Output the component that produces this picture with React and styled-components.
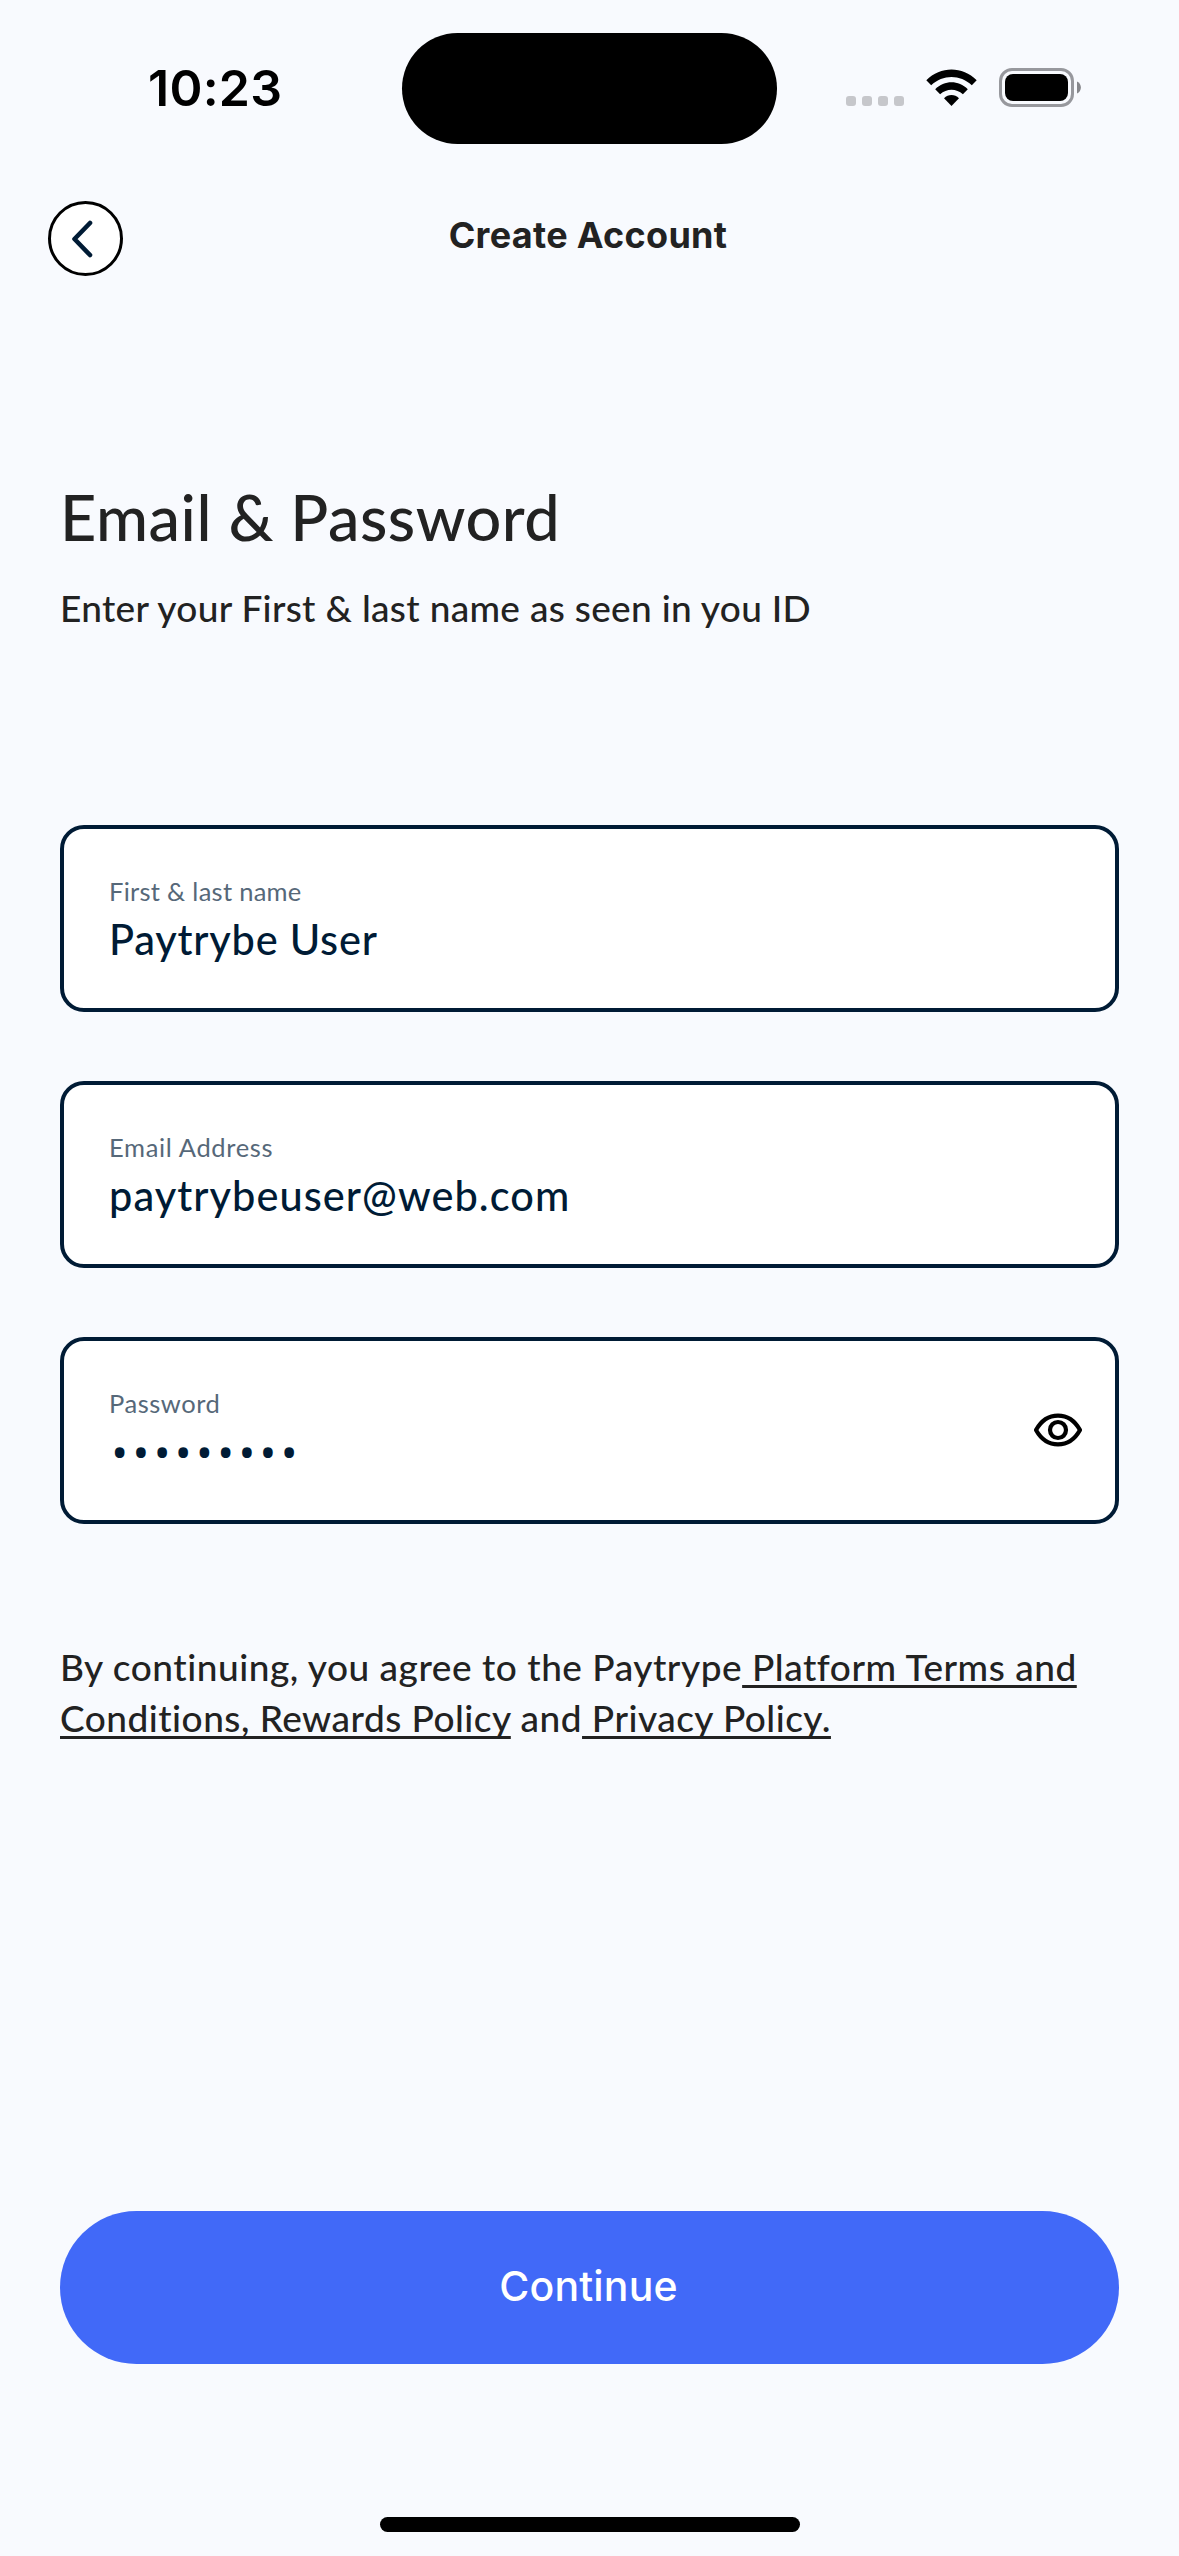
import React from "react";
import styled, { createGlobalStyle } from "styled-components";

const GlobalStyle = createGlobalStyle`
  * { box-sizing: border-box; }
  body { margin: 0; background: #f8fafe; }
`;

const Screen = styled.div`
  display: flex;
  flex-direction: column;
  width: 1179px;
  height: 2556px;
  background: #f8fafe;
  color: #222222;
  font-family: Lato, "Liberation Sans", sans-serif;
  font-variant-ligatures: none;
  overflow: hidden;
`;

const StatusBar = styled.div`
  display: grid;
  grid-template-columns: 402px 375px 1fr;
  align-items: center;
  height: 177px;
`;

const Clock = styled.time`
  padding: 0 0 2px 148px;
  color: #000;
  font-family: Inter, sans-serif;
  font-size: 50px;
  font-weight: 600;
  line-height: 60px;
  letter-spacing: 0.25px;
`;

const Island = styled.div`
  height: 111px;
  border-radius: 56px;
  background: #000;
`;

const StatusIcons = styled.div`
  display: flex;
  align-items: center;
  padding: 0 0 2px 69px;
`;

const SignalDots = styled.div`
  display: flex;
  gap: 6px;
  padding-top: 27px;
`;

const SignalDot = styled.span`
  width: 10px;
  height: 10px;
  border-radius: 3px;
  background: #c6c7cb;
`;

const WifiIcon = styled.svg`
  width: 51px;
  height: 38px;
  margin: 0 22px 0 22px;
`;

const BatteryIcon = styled.svg`
  width: 83px;
  height: 39px;
`;

const Header = styled.header`
  display: grid;
  grid-template-columns: 75px 1fr 75px;
  align-items: center;
  padding: 24px 48px 0;
`;

const BackButton = styled.button`
  display: flex;
  align-items: center;
  justify-content: center;
  width: 75px;
  height: 75px;
  padding: 0;
  border: 3px solid #000;
  border-radius: 50%;
  background: #fff;

  svg {
    width: 26px;
    height: 40px;
    margin-right: 7px;
  }
`;

const ScreenTitle = styled.h1`
  margin: 0;
  padding: 0 3px 7px 0;
  font-family: Inter, sans-serif;
  font-size: 36px;
  font-weight: 700;
  line-height: 44px;
  letter-spacing: 0.3px;
  text-align: center;
`;

const Content = styled.main`
  display: flex;
  flex: 1;
  flex-direction: column;
  padding: 203px 60px 0;
`;

const Heading = styled.h2`
  margin: 0;
  font-size: 63px;
  font-weight: 500;
  line-height: 76px;
  letter-spacing: 0.5px;
`;

const Subheading = styled.p`
  margin: 28px 0 0;
  font-size: 37px;
  font-weight: 500;
  line-height: 50px;
  letter-spacing: 0.32px;
`;

const Form = styled.form`
  display: flex;
  flex-direction: column;
  gap: 69px;
  margin-top: 192px;
`;

const FieldBox = styled.div`
  display: flex;
  align-items: center;
  justify-content: space-between;
  height: 187px;
  padding: 0 32px 0 45px;
  border: 4px solid #001b35;
  border-radius: 24px;
  background: #fff;
`;

const FieldText = styled.div`
  display: flex;
  flex-direction: column;
  gap: 7px;
  padding-top: 1px;
`;

const FieldLabel = styled.span`
  color: #566879;
  font-size: 25.5px;
  line-height: 32px;
  letter-spacing: ${({ $tracking }) => $tracking}px;
`;

const FieldValue = styled.span`
  color: #001b35;
  font-size: 41.5px;
  font-weight: 500;
  line-height: 50px;
  letter-spacing: ${({ $tracking }) => $tracking}px;
`;

const MaskedValue = styled(FieldValue)`
  padding-left: 2px;
  font-family: "Open Sans", sans-serif;
  font-size: 46px;
  font-weight: 400;
`;

const EyeIcon = styled.svg`
  width: 50px;
  height: 36px;
  margin-bottom: 2px;
`;

const Terms = styled.p`
  margin: 117px 0 0;
  font-size: 37px;
  font-weight: 500;
  line-height: 51px;
`;

const TermsLine = styled.span`
  display: block;
  white-space: pre;
  letter-spacing: ${({ $tracking }) => $tracking}px;
`;

const TermsLink = styled.a`
  color: inherit;
  text-decoration: underline;
  text-decoration-thickness: 2.5px;
  text-underline-offset: 3.5px;
  text-decoration-skip-ink: none;
`;

const Footer = styled.footer`
  display: flex;
  flex-direction: column;
  align-items: center;
  padding: 0 60px 24px;
`;

const ContinueButton = styled.button`
  width: 100%;
  height: 153px;
  padding: 0 2px 3px 0;
  border: 0;
  border-radius: 77px;
  background: #4169f8;
  color: #fff;
  font-family: Inter, sans-serif;
  font-size: 41px;
  font-weight: 500;
  line-height: 50px;
  letter-spacing: 0.17px;
`;

const HomeIndicator = styled.div`
  width: 420px;
  height: 15px;
  margin-top: 153px;
  border-radius: 8px;
  background: #000;
`;

function Wifi() {
  return (
    <WifiIcon viewBox="0 0 51 38">
      <path d="M0.3 11.2C14.5-3.1 36.5-3.1 50.7 11.2L45.8 16.2C34.2 5.1 16.8 5.1 5.2 16.2Z" />
      <path d="M9.2 20.3C18.4 11 32.6 11 41.8 20.3L36.9 25.2C30.4 19.1 20.6 19.1 14.1 25.2Z" />
      <path d="M18 29.2C22.3 25 28.7 25 33 29.2L25.5 37Z" strokeLinejoin="round" />
    </WifiIcon>
  );
}

function Battery() {
  return (
    <BatteryIcon viewBox="0 0 83 39">
      <rect x="1.5" y="1.5" width="72" height="36" rx="11.5" fill="none" stroke="#97989d" strokeWidth="3" />
      <rect x="6" y="6" width="63" height="27" rx="8" />
      <path d="M78 13.5C83.2 15.5 83.2 23.5 78 25.5Z" fill="#86878b" />
    </BatteryIcon>
  );
}

function Field({ label, labelTracking, icon, children }) {
  return (
    <FieldBox>
      <FieldText>
        <FieldLabel $tracking={labelTracking}>{label}</FieldLabel>
        {children}
      </FieldText>
      {icon}
    </FieldBox>
  );
}

export default function App() {
  return (
    <Screen>
      <GlobalStyle />
      <StatusBar>
        <Clock>10:23</Clock>
        <Island />
        <StatusIcons>
          <SignalDots>
            <SignalDot />
            <SignalDot />
            <SignalDot />
            <SignalDot />
          </SignalDots>
          <Wifi />
          <Battery />
        </StatusIcons>
      </StatusBar>

      <Header>
        <BackButton aria-label="Back">
          <svg viewBox="0 0 26 40" fill="none" stroke="#001b35" strokeWidth="4.6" strokeLinecap="round" strokeLinejoin="round">
            <path d="M21 4L5.5 20L21 36" />
          </svg>
        </BackButton>
        <ScreenTitle>Create Account</ScreenTitle>
      </Header>

      <Content>
        <Heading>Email &amp; Password</Heading>
        <Subheading>Enter your First &amp; last name as seen in you ID</Subheading>

        <Form>
          <Field label="First & last name" labelTracking={0.28}>
            <FieldValue $tracking={0.78}>Paytrybe User</FieldValue>
          </Field>
          <Field label="Email Address" labelTracking={0.66}>
            <FieldValue $tracking={1.05}>paytrybeuser@web.com</FieldValue>
          </Field>
          <Field
            label="Password"
            labelTracking={0.55}
            icon={
              <EyeIcon viewBox="0 0 50 36" fill="none" stroke="#000" strokeWidth="4.2" strokeLinejoin="round">
                <path d="M3 18C8 9 15.5 3.6 25 3.6S42 9 47 18C42 27 34.5 32.4 25 32.4S8 27 3 18Z" />
                <circle cx="25" cy="18" r="8" />
              </EyeIcon>
            }
          >
            <MaskedValue $tracking={3.9}>•••••••••</MaskedValue>
          </Field>
        </Form>

        <Terms>
          <TermsLine $tracking={0.53}>
            By continuing, you agree to the Paytrype<TermsLink> Platform Terms and</TermsLink>
          </TermsLine>
          <TermsLine $tracking={0.48}>
            <TermsLink>Conditions, Rewards Policy</TermsLink> and<TermsLink> Privacy Policy.</TermsLink>
          </TermsLine>
        </Terms>
      </Content>

      <Footer>
        <ContinueButton>Continue</ContinueButton>
        <HomeIndicator />
      </Footer>
    </Screen>
  );
}
